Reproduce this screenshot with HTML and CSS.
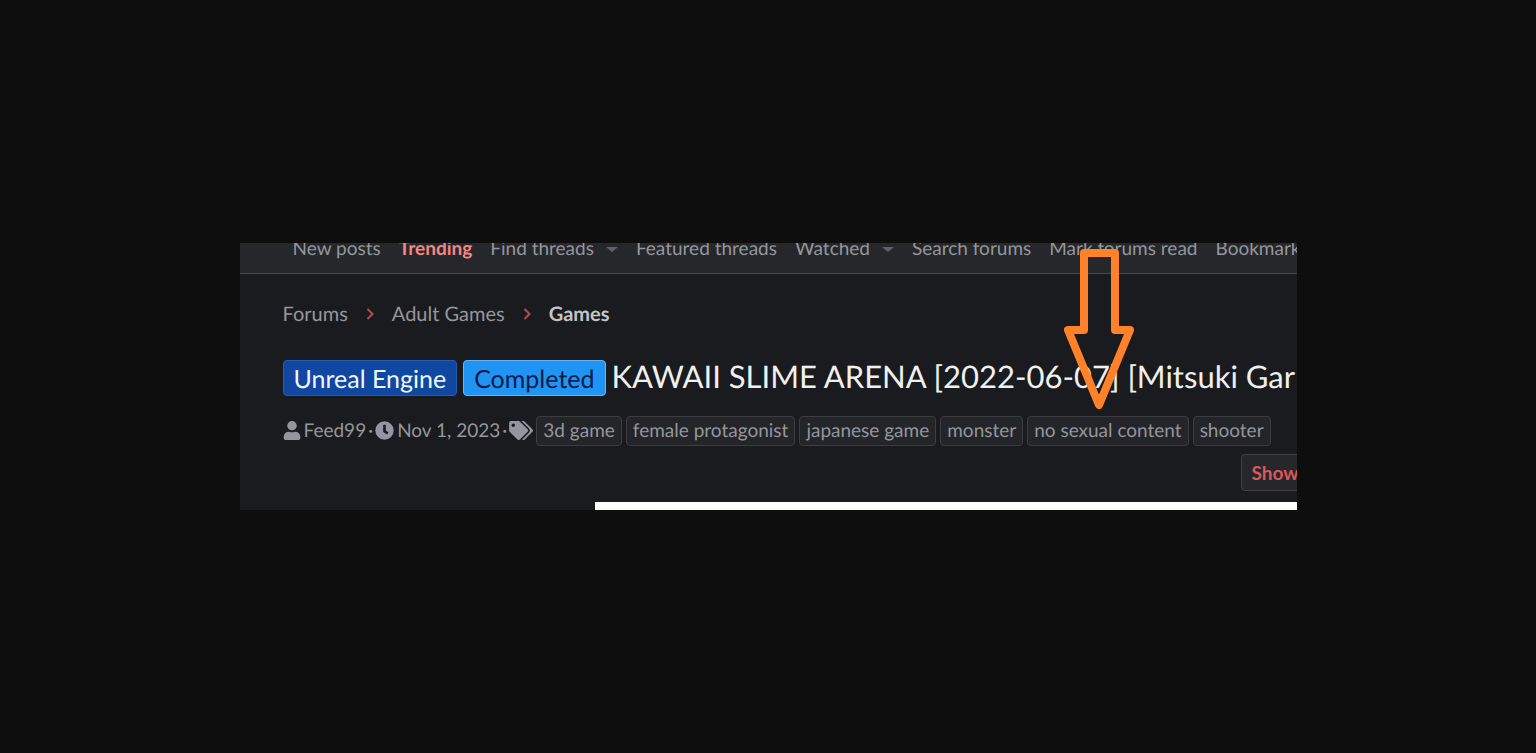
FILE: index.html
```html
<!DOCTYPE html>
<html lang="en">
<head>
    <meta charset="UTF-8">
    <meta name="viewport" content="width=device-width, initial-scale=1.0">
    <title>KAWAII SLIME ARENA</title>
    <link rel="stylesheet" href="styles.css">
</head>
<body>
    <main class="panel">
        <nav class="sub-nav">
            <a href="#">New posts</a>
            <a href="#" class="trending">Trending</a>
            <a href="#" class="has-menu">Find threads</a>
            <a href="#">Featured threads</a>
            <a href="#" class="has-menu">Watched</a>
            <a href="#">Search forums</a>
            <a href="#">Mark forums read</a>
            <a href="#">Bookmark</a>
        </nav>

        <div class="content">
            <nav class="breadcrumbs">
                <a href="#">Forums</a>
                <svg class="chevron" viewBox="0 0 8 12"><path d="M1.500 1 6.500 6l-5 5"/></svg>
                <a href="#">Adult Games</a>
                <svg class="chevron" viewBox="0 0 8 12"><path d="M1.500 1 6.500 6l-5 5"/></svg>
                <a href="#" class="current">Games</a>
            </nav>

            <div class="title-row">
                <a href="#" class="label engine">Unreal Engine</a>
                <a href="#" class="label completed">Completed</a>
                <h1>KAWAII SLIME ARENA [2022-06-07] [Mitsuki Gar</h1>
            </div>

            <div class="meta">
                <svg class="icon user" viewBox="0 0 448 512"><path d="M224 256a128 128 0 1 0 0-256 128 128 0 0 0 0 256zm90 32h-17a174 174 0 0 1-146 0h-17A134 134 0 0 0 0 422v42a48 48 0 0 0 48 48h352a48 48 0 0 0 48-48v-42a134 134 0 0 0-134-134z"/></svg>
                <a href="#">Feed99</a>
                <span class="dot">·</span>
                <svg class="icon clock" viewBox="0 0 512 512"><path fill-rule="evenodd" d="M256 8a248 248 0 1 0 0 496 248 248 0 0 0 0-496zm57 350-88-64q-5-4-5-10V116q0-12 12-12h48q12 0 12 12v138l65 47q10 7 3 17l-28 38q-8 9-19 2z"/></svg>
                <time>Nov 1, 2023</time>
                <span class="dot">·</span>
                <svg class="icon tags" viewBox="0 0 640 512"><path fill-rule="evenodd" d="M498 225 287 14A48 48 0 0 0 253 0H48A48 48 0 0 0 0 48v205a48 48 0 0 0 14 34l211 211a48 48 0 0 0 68 0l205-205a48 48 0 0 0 0-68zM112 160a48 48 0 1 1 0-96 48 48 0 0 1 0 96zm514 133L421 498a48 48 0 0 1-68 0l-1-1 175-175a88 88 0 0 0 0-126L331 0h50a48 48 0 0 1 34 14l211 211a48 48 0 0 1 0 68z"/></svg>
                <div class="tag-list">
                    <a href="#">3d game</a>
                    <a href="#">female protagonist</a>
                    <a href="#">japanese game</a>
                    <a href="#">monster</a>
                    <a href="#">no sexual content</a>
                    <a href="#">shooter</a>
                </div>
            </div>

            <div class="actions">
                <button type="button">Show</button>
            </div>
        </div>

        <div class="post-image"></div>

        <svg class="arrow" viewBox="0 0 70 162"><path d="M20 5h31v77h15L35 157 4 82h16z"/></svg>
    </main>
</body>
</html>
```
FILE: styles.css
```css
body {
    display: flex;
    align-items: center;
    justify-content: center;
    min-height: 100vh;
    margin: 0;
    background-color: #0e0e0e;
    font-family: Lato, "Liberation Sans", sans-serif;
    font-size: 19px;
    text-rendering: geometricPrecision;
    color: #94969b;
}
a {
    color: inherit;
    text-decoration: none;
}
.panel {
    position: relative;
    width: 100%;
    max-width: 1057px;
    overflow: hidden;
    background-color: #1a1b1e;
    white-space: nowrap;
}
.sub-nav {
    display: flex;
    gap: 18px;
    padding: 0 0 18px 53px;
    border-bottom: 1px solid #46484b;
    background-color: #25272a;
    line-height: 12px;
}
.sub-nav .trending {
    color: #f88583;
    font-weight: bold;
}
.has-menu {
    display: flex;
    align-items: center;
    gap: 12px;
}
.has-menu::after {
    content: "";
    border: 6px solid transparent;
    border-top: 5px solid #606367;
    border-bottom: 0;
}
.content {
    padding: 28px 0 0 43px;
}
.breadcrumbs {
    display: flex;
    align-items: center;
    gap: 18px;
    font-size: 20px;
    line-height: 24px;
}
.breadcrumbs .current {
    color: #c3c5c9;
    font-weight: bold;
}
.chevron {
    width: 8px;
    height: 12px;
    fill: none;
    stroke: #b84a4b;
    stroke-width: 2;
}
.title-row {
    display: flex;
    align-items: flex-start;
    gap: 6px;
    margin-top: 34px;
}
.label {
    padding: 2px 10px 0;
    border: 1px solid #2a5cae;
    border-radius: 4px;
    font-size: 25px;
    line-height: 32px;
}
.engine {
    background-color: #0f47a1;
    color: #f2f7ff;
}
.completed {
    border-color: #66b6f7;
    background-color: #2094f3;
    color: #08194a;
}
h1 {
    margin: 0;
    color: #f0f0f0;
    font-size: 31px;
    font-weight: normal;
    line-height: 32px;
}
.meta {
    display: flex;
    align-items: center;
    gap: 3px;
    margin-top: 20px;
    line-height: 28px;
}
.icon {
    flex: none;
    height: 19px;
    margin-bottom: 2px;
    fill: #94969f;
}
.user {
    width: 18px;
}
.clock {
    width: 19px;
}
.tags {
    width: 24px;
}
.dot {
    margin: 0 -1px;
}
.tag-list {
    display: flex;
    gap: 4px;
}
.tag-list a {
    padding: 0 6px 1px;
    border: 1px solid #3b3d41;
    border-radius: 4px;
    background-color: #232529;
    line-height: 27px;
}
.actions {
    display: flex;
    justify-content: flex-end;
    margin-top: 8px;
}
button {
    height: 37px;
    margin-right: -12px;
    padding: 0 9px;
    border: 1px solid #3f4144;
    border-radius: 4px;
    background-color: #25272a;
    color: #df5658;
    font: bold 19px Lato, "Liberation Sans", sans-serif;
}
.post-image {
    height: 8px;
    margin: 11px 0 0 355px;
    background-color: #fff;
}
.arrow {
    position: absolute;
    top: 5px;
    left: 824px;
    width: 70px;
    height: 162px;
    fill: none;
    stroke: #ff8129;
    stroke-width: 8;
    stroke-linejoin: round;
}
```
